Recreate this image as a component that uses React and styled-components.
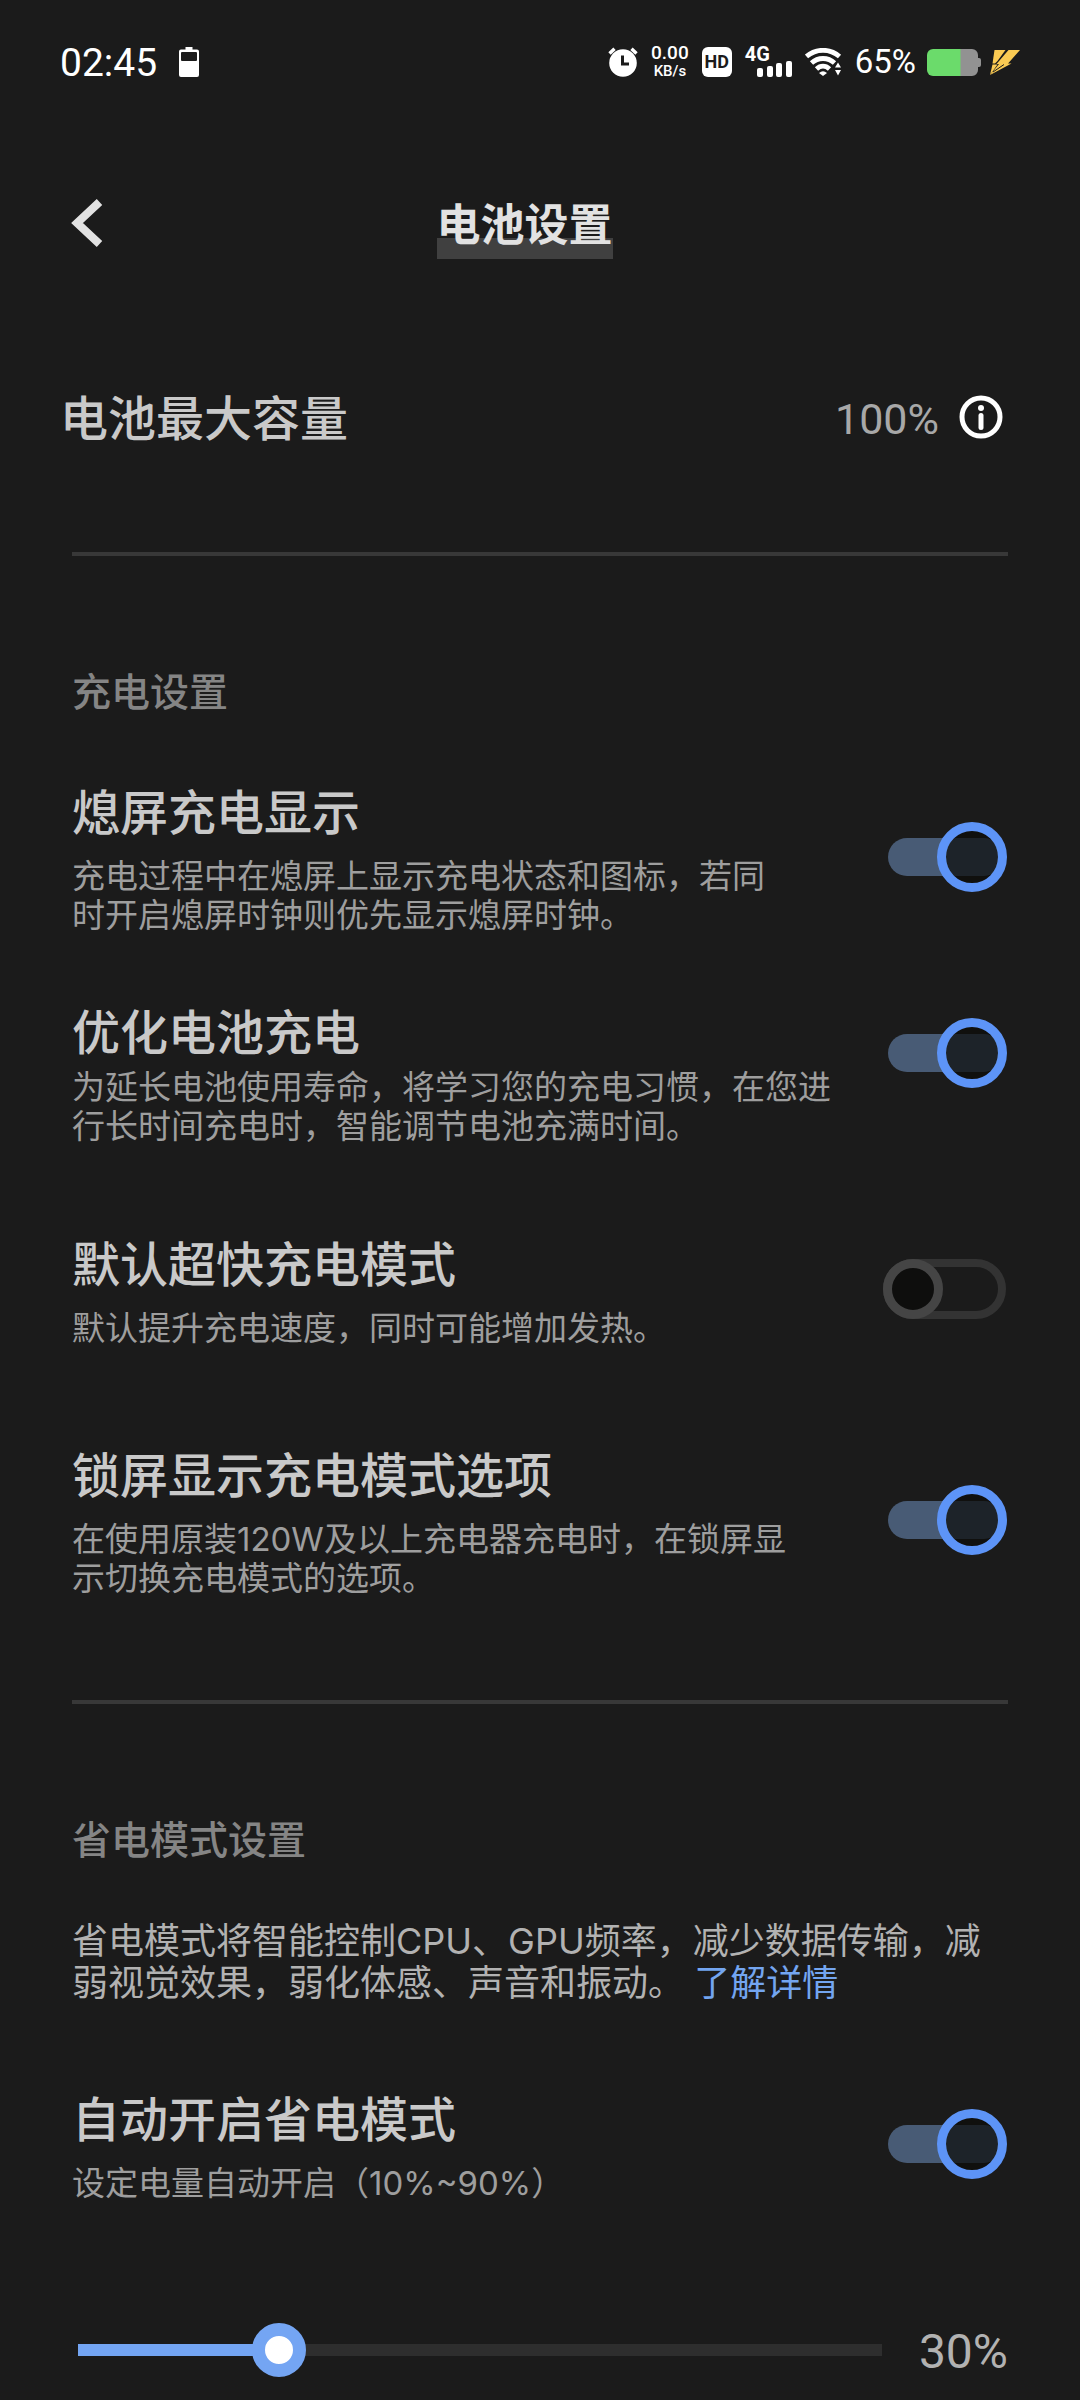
import React, { useState } from 'react'
import styled, { createGlobalStyle } from 'styled-components'

const GlobalStyle = createGlobalStyle`
  * {
    box-sizing: border-box;
  }

  body {
    margin: 0;
    background: #1b1b1b;
    color: #c9c9c9;
    font-family: Inter, 'Noto Sans CJK SC', sans-serif;
  }
`

const Page = styled.div`
  min-height: 100vh;
  overflow: hidden;
  background: #1b1b1b;
`

const StatusBar = styled.div`
  display: flex;
  align-items: center;
  justify-content: space-between;
  height: 124px;
  padding: 0 60px;
  color: #ffffff;
  font-family: Roboto, sans-serif;
`

const StatusGroup = styled.div`
  display: flex;
  align-items: center;
  gap: ${({ $gap }) => $gap}px;
`

const Clock = styled.span`
  padding-top: 2px;
  font-size: 39px;
  line-height: 44px;
`

const Speed = styled.div`
  display: flex;
  flex-direction: column;
  align-items: center;
  gap: 4px;
  font-size: 19px;
  font-weight: 500;
  line-height: 14px;

  small {
    font-size: 15px;
  }
`

const HdBadge = styled.span`
  width: 30px;
  height: 30px;
  border-radius: 6px;
  background: #ffffff;
  color: #1b1b1b;
  font-size: 18px;
  font-weight: 700;
  line-height: 30px;
  text-align: center;
`

const Signal = styled.div`
  display: flex;
  flex-direction: column;
  width: 47px;
  font-size: 20px;
  font-weight: 700;
  line-height: 14px;

  svg {
    align-self: flex-end;
  }
`

const Percent = styled.span`
  font-size: 33px;
  line-height: 36px;
`

const Header = styled.header`
  display: grid;
  grid-template-columns: 1fr auto 1fr;
  align-items: center;
  height: 198px;
  padding: 0 102px 0 71px;
`

const BackButton = styled.button`
  justify-self: start;
  display: flex;
  padding: 0;
  border: 0;
  background: none;
  color: #e2e2e2;
  cursor: pointer;
`

const PageTitle = styled.h1`
  margin: 0;
  padding-top: 4px;
  background: linear-gradient(#404040, #404040) no-repeat bottom / 100% 21px;
  color: #e2e2e2;
  font-size: 44px;
  font-weight: 700;
  line-height: 68px;
`

const CapacityRow = styled.section`
  display: flex;
  align-items: center;
  justify-content: space-between;
  height: 190px;
  padding: 0 77px 0 60px;
`

const CapacityLabel = styled.h2`
  margin: 0;
  padding-top: 3px;
  font-size: 48px;
  font-weight: 500;
  line-height: 68px;
`

const CapacityValue = styled.div`
  display: flex;
  align-items: center;
  gap: 20px;
  color: #a8a8a8;
  font-family: Roboto, sans-serif;
  font-size: 43px;
  line-height: 48px;

  span {
    padding-top: 3px;
  }
`

const InfoButton = styled.button`
  display: flex;
  padding: 0;
  border: 0;
  background: none;
  color: #ffffff;
  cursor: pointer;
`

const Divider = styled.hr`
  height: 4px;
  margin: ${({ $top }) => $top}px 72px 0;
  border: 0;
  background: #383838;
`

const Section = styled.section`
  padding: 107px 72px 0;
`

const SectionTitle = styled.h2`
  margin: 0 0 ${({ $gap }) => $gap}px;
  color: #858585;
  font-size: 39px;
  font-weight: 500;
  line-height: 58px;
`

const Item = styled.div`
  display: flex;
  align-items: ${({ $top }) => ($top ? 'flex-start' : 'center')};
  justify-content: space-between;
  margin-bottom: ${({ $space }) => $space || 0}px;

  input {
    margin-top: ${({ $top }) => ($top ? 20 : 0)}px;
  }
`

const ItemText = styled.div`
  display: flex;
  flex-direction: column;
  gap: ${({ $tight }) => ($tight ? 0 : 9)}px;
`

const ItemTitle = styled.label`
  font-size: 48px;
  font-weight: 500;
  line-height: 70px;
`

const ItemDesc = styled.p`
  margin: 0;
  color: #9e9e9e;
  font-size: 33px;
  line-height: 39px;
`

const Switch = styled.input.attrs({ type: 'checkbox', role: 'switch' })`
  position: relative;
  flex: none;
  appearance: none;
  width: 125px;
  height: 70px;
  margin: 0;
  cursor: pointer;

  &::before,
  &::after {
    content: '';
    position: absolute;
    box-sizing: border-box;
  }

  &::before {
    inset: 5px 2px 5px 0;
    border: 8px solid #333333;
    border-radius: 30px;
  }

  &::after {
    top: 5px;
    left: 0;
    width: 60px;
    height: 60px;
    border: 9px solid #454545;
    border-radius: 50%;
    background: #0e0e0d;
  }

  &:checked::before {
    inset: 16px 5px;
    border: 0;
    border-radius: 19px;
    background: #485b75;
  }

  &:checked::after {
    top: 0;
    left: 54px;
    width: 70px;
    height: 70px;
    border-color: #5d94f7;
    background: rgba(12, 11, 8, 0.7);
    background-clip: padding-box;
  }
`

const Intro = styled.p`
  margin: 0 0 81px;
  color: #b2b2b2;
  font-size: 36px;
  line-height: 42px;
`

const Link = styled.a`
  color: #73a5f0;
  text-decoration: none;
`

const SliderRow = styled.div`
  display: flex;
  align-items: center;
  padding: 118px 0 20px 6px;
`

const SliderBox = styled.div`
  display: flex;
  flex: 1;
  margin: 0 -27px;
`

// the rail stops half a thumb short of both ends of the input
const Slider = styled.input.attrs({ type: 'range' })`
  appearance: none;
  width: 100%;
  height: 54px;
  margin: 0;
  background: none;
  cursor: pointer;

  &::-webkit-slider-runnable-track {
    height: 12px;
    background:
      linear-gradient(#74a5f3, #74a5f3) no-repeat 27px 0 / calc((100% - 54px) * var(--fill)) 12px,
      linear-gradient(#2e2e2e, #2e2e2e) no-repeat 27px 0 / calc(100% - 54px) 12px;
  }

  &::-webkit-slider-thumb {
    appearance: none;
    width: 54px;
    height: 54px;
    margin-top: -21px;
    border: 13px solid #74a5f3;
    border-radius: 50%;
    background: #ffffff;
  }
`

const SliderValue = styled.output`
  width: 126px;
  padding-top: 4px;
  color: #b2b2b2;
  font-family: Roboto, sans-serif;
  font-size: 48px;
  line-height: 54px;
  text-align: right;
`

const SmallBatteryIcon = () => (
  <svg width="20" height="30" viewBox="0 0 20 30">
    <path d="M6.500 0h7v2.500H18a2 2 0 0 1 2 2V28a2 2 0 0 1-2 2H2a2 2 0 0 1-2-2V4.500a2 2 0 0 1 2-2h4.500z" fill="#fff" />
    <rect x="2" y="5" width="16" height="9" rx="1" fill="#1b1b1b" />
  </svg>
)

const AlarmIcon = () => (
  <svg width="30" height="30" viewBox="0 0 30 30">
    <circle cx="15" cy="16" r="13.800" fill="#fff" />
    <path d="M1.500 6.500L6.500 1.800M28.500 6.500L23.500 1.800" stroke="#fff" strokeWidth="3.400" fill="none" />
    <path d="M14.500 8.500V17H21" stroke="#1b1b1b" strokeWidth="3" fill="none" />
  </svg>
)

const BarsIcon = () => (
  <svg width="35" height="16" viewBox="0 0 35 16">
    <rect x="0" y="7" width="6" height="9" rx="2" fill="#fff" />
    <rect x="10" y="5" width="6" height="11" rx="2" fill="#fff" />
    <rect x="19" y="2" width="6" height="14" rx="2" fill="#fff" />
    <rect x="29" y="0" width="6" height="16" rx="2" fill="#fff" />
  </svg>
)

const WifiIcon = () => (
  <svg width="37" height="28" viewBox="0 0 37 28">
    <g stroke="#fff" strokeWidth="4.800" fill="none">
      <path d="M1.500 8.500C11 0.200 25 0.200 34.500 8.500" />
      <path d="M6.500 15C13 9 23 9 29.500 15" />
      <path d="M11.500 21C15.500 17.300 20.500 17.300 24.500 21" />
    </g>
    <path d="M14 25q4-3.500 8 0L18 28z" fill="#fff" />
    <path d="M33 12L38 20.500H28z" fill="#1b1b1b" />
    <path d="M30 19.500L33 14.500L36 19.500zM30 22L33 27.500L36 22z" fill="#fff" />
  </svg>
)

const BatteryIcon = () => (
  <svg width="54" height="27" viewBox="0 0 54 27">
    <path d="M33 0H45a6 6 0 0 1 6 6V9h1a2 2 0 0 1 2 2v5a2 2 0 0 1-2 2h-1v3a6 6 0 0 1-6 6H33z" fill="#929292" />
    <path d="M6 0H33.500V27H6a6 6 0 0 1-6-6V6a6 6 0 0 1 6-6z" fill="#6bdb6b" />
  </svg>
)

const FlashIcon = () => (
  <svg width="30" height="25" viewBox="0 0 30 25">
    <path d="M4.500 0H15.500L7.500 11L5 13.500H2.500z" fill="#fbcb53" />
    <path d="M18.500 0H30L18 13.500H21.500L0 25L9 14H6.500z" fill="#fbcb53" />
    <path d="M2.500 14.500H7.500L0 25z" fill="#fbcb53" />
    <path d="M3 22L14 14.500" stroke="#1b1b1b" strokeWidth="1" />
  </svg>
)

const BackIcon = () => (
  <svg width="32" height="48" viewBox="0 0 32 48">
    <path d="M28.500 3L6 24L28.500 45" stroke="currentColor" strokeWidth="8" fill="none" />
  </svg>
)

const InfoIcon = () => (
  <svg width="44" height="44" viewBox="0 0 44 44">
    <circle cx="22" cy="22" r="19" stroke="currentColor" strokeWidth="5" fill="none" />
    <circle cx="22" cy="13" r="3" fill="currentColor" />
    <path d="M22 20.500V32.500" stroke="currentColor" strokeWidth="5" strokeLinecap="round" />
  </svg>
)

const SettingItem = ({ id, title, children, initial, space, top }) => {
  const [checked, setChecked] = useState(initial)
  return (
    <Item $space={space} $top={top}>
      <ItemText $tight={top}>
        <ItemTitle htmlFor={id}>{title}</ItemTitle>
        <ItemDesc>{children}</ItemDesc>
      </ItemText>
      <Switch id={id} checked={checked} onChange={() => setChecked(!checked)} />
    </Item>
  )
}

const App = () => {
  const [level, setLevel] = useState(30)

  return (
    <>
      <GlobalStyle />
      <Page>
        <StatusBar>
          <StatusGroup $gap={22}>
            <Clock>02:45</Clock>
            <SmallBatteryIcon />
          </StatusGroup>
          <StatusGroup $gap={11}>
            <StatusGroup $gap={13}>
              <AlarmIcon />
              <Speed>
                <span>0.00</span>
                <small>KB/s</small>
              </Speed>
              <HdBadge>HD</HdBadge>
              <Signal>
                <span>4G</span>
                <BarsIcon />
              </Signal>
              <WifiIcon />
              <Percent>65%</Percent>
            </StatusGroup>
            <StatusGroup $gap={9}>
              <BatteryIcon />
              <FlashIcon />
            </StatusGroup>
          </StatusGroup>
        </StatusBar>

        <Header>
          <BackButton aria-label="返回">
            <BackIcon />
          </BackButton>
          <PageTitle>电池设置</PageTitle>
        </Header>

        <CapacityRow>
          <CapacityLabel>电池最大容量</CapacityLabel>
          <CapacityValue>
            <span>100%</span>
            <InfoButton aria-label="电池最大容量说明">
              <InfoIcon />
            </InfoButton>
          </CapacityValue>
        </CapacityRow>

        <Divider $top={40} />

        <Section>
          <SectionTitle $gap={57}>充电设置</SectionTitle>
          <SettingItem id="screen-off" title="熄屏充电显示" initial={true} space={63}>
            充电过程中在熄屏上显示充电状态和图标，若同
            <br />
            时开启熄屏时钟则优先显示熄屏时钟。
          </SettingItem>
          <SettingItem id="optimized" title="优化电池充电" initial={true} space={84} top>
            为延长电池使用寿命，将学习您的充电习惯，在您进
            <br />
            行长时间充电时，智能调节电池充满时间。
          </SettingItem>
          <SettingItem id="fast-charge" title="默认超快充电模式" initial={false} space={93}>
            默认提升充电速度，同时可能增加发热。
          </SettingItem>
          <SettingItem id="lock-screen" title="锁屏显示充电模式选项" initial={true}>
            在使用原装120W及以上充电器充电时，在锁屏显
            <br />
            示切换充电模式的选项。
          </SettingItem>
        </Section>

        <Divider $top={102} />

        <Section>
          <SectionTitle $gap={51}>省电模式设置</SectionTitle>
          <Intro>
            省电模式将智能控制CPU、GPU频率，减少数据传输，减
            <br />
            弱视觉效果，弱化体感、声音和振动。 <Link href="#details">了解详情</Link>
          </Intro>
          <SettingItem id="auto-saver" title="自动开启省电模式" initial={true}>
            设定电量自动开启（10%~90%）
          </SettingItem>
          <SliderRow>
            <SliderBox>
              <Slider
                id="level"
                aria-label="自动开启电量"
                min={10}
                max={90}
                value={level}
                style={{ '--fill': (level - 10) / 80 }}
                onChange={e => setLevel(Number(e.target.value))}
              />
            </SliderBox>
            <SliderValue htmlFor="level">{level}%</SliderValue>
          </SliderRow>
        </Section>
      </Page>
    </>
  )
}

export default App
